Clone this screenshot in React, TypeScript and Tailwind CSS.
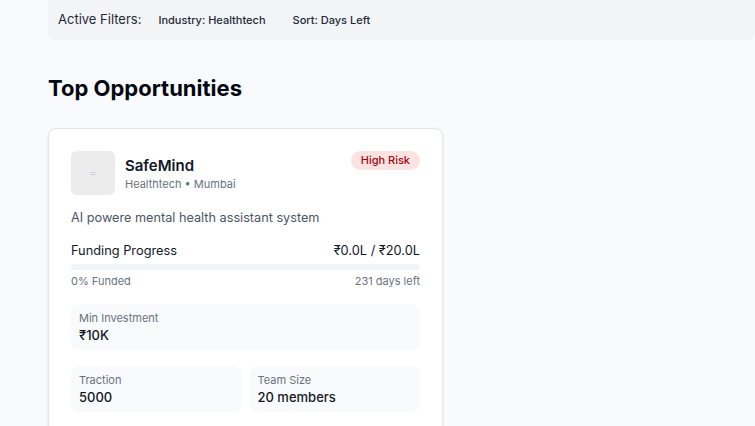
export default function App() {
  return (
    <div
      className="min-h-screen bg-[#f9fafb] px-12 text-gray-900 overflow-hidden"
      style={{ height: 426, fontFamily: "Inter, 'Noto Sans', sans-serif" }}
    >
      {/* filter bar, scrolled partly out of view */}
      <div className="-mt-[6px] flex h-[46px] items-center rounded-lg bg-[#f3f4f6] pl-[10px] pt-[6px] -mr-12">
        <span className="text-[13px] text-gray-800">Active Filters:</span>
        <span className="ml-[17px] text-[11px] font-medium text-gray-800">Industry: Healthtech</span>
        <span className="ml-[27px] text-[11px] font-medium text-gray-800">Sort: Days Left</span>
      </div>

      <h2 className="mt-[34px] text-[22px] font-bold leading-7 text-gray-950">Top Opportunities</h2>

      <div className="mt-[26px] w-[395px] rounded-lg border border-gray-200 bg-white p-[22px] shadow-sm">
        <div className="flex items-start justify-between">
          <div className="flex items-center gap-[10px]">
            <div className="flex h-11 w-11 items-center justify-center rounded-md bg-[#ececec]">
              <div className="h-[3px] w-[6px] border-y border-gray-300" />
            </div>
            <div className="pt-[1px]">
              <div className="text-[15px] font-semibold leading-5">SafeMind</div>
              <div className="text-[11px] leading-4 text-gray-500">Healthtech • Mumbai</div>
            </div>
          </div>
          <span className="rounded-full bg-[#fde2e2] px-[10px] py-[2px] text-[11px] font-medium leading-[15px] text-red-800">
            High Risk
          </span>
        </div>

        <p className="mt-[13px] text-[12.7px] leading-5 text-gray-600">AI powere mental health assistant system</p>

        <div className="mt-[13px] flex items-center justify-between text-[12.8px] leading-5 text-gray-900">
          <span>Funding Progress</span>
          <span>₹0.0L / ₹20.0L</span>
        </div>
        <div className="mt-[3px] h-[6px] w-full rounded-full bg-gray-100">
          <div className="h-full rounded-full bg-indigo-500" style={{ width: "0%" }} />
        </div>
        <div className="mt-[3px] flex justify-between text-[11px] leading-4 text-gray-500">
          <span>0% Funded</span>
          <span>231 days left</span>
        </div>

        <div className="mt-[15px] rounded-lg bg-[#f9fafb] px-2 py-[6px]">
          <div className="text-[11px] leading-4 text-gray-500">Min Investment</div>
          <div className="text-[13px] font-medium leading-[18px]">₹10K</div>
        </div>

        <div className="mt-4 grid grid-cols-2 gap-2">
          <div className="rounded-lg bg-[#f9fafb] px-2 py-[6px]">
            <div className="text-[11px] leading-4 text-gray-500">Traction</div>
            <div className="text-[13px] font-medium leading-[18px]">5000</div>
          </div>
          <div className="rounded-lg bg-[#f9fafb] px-2 py-[6px]">
            <div className="text-[11px] leading-4 text-gray-500">Team Size</div>
            <div className="text-[13px] font-medium leading-[18px]">20 members</div>
          </div>
        </div>
      </div>
    </div>
  );
}
